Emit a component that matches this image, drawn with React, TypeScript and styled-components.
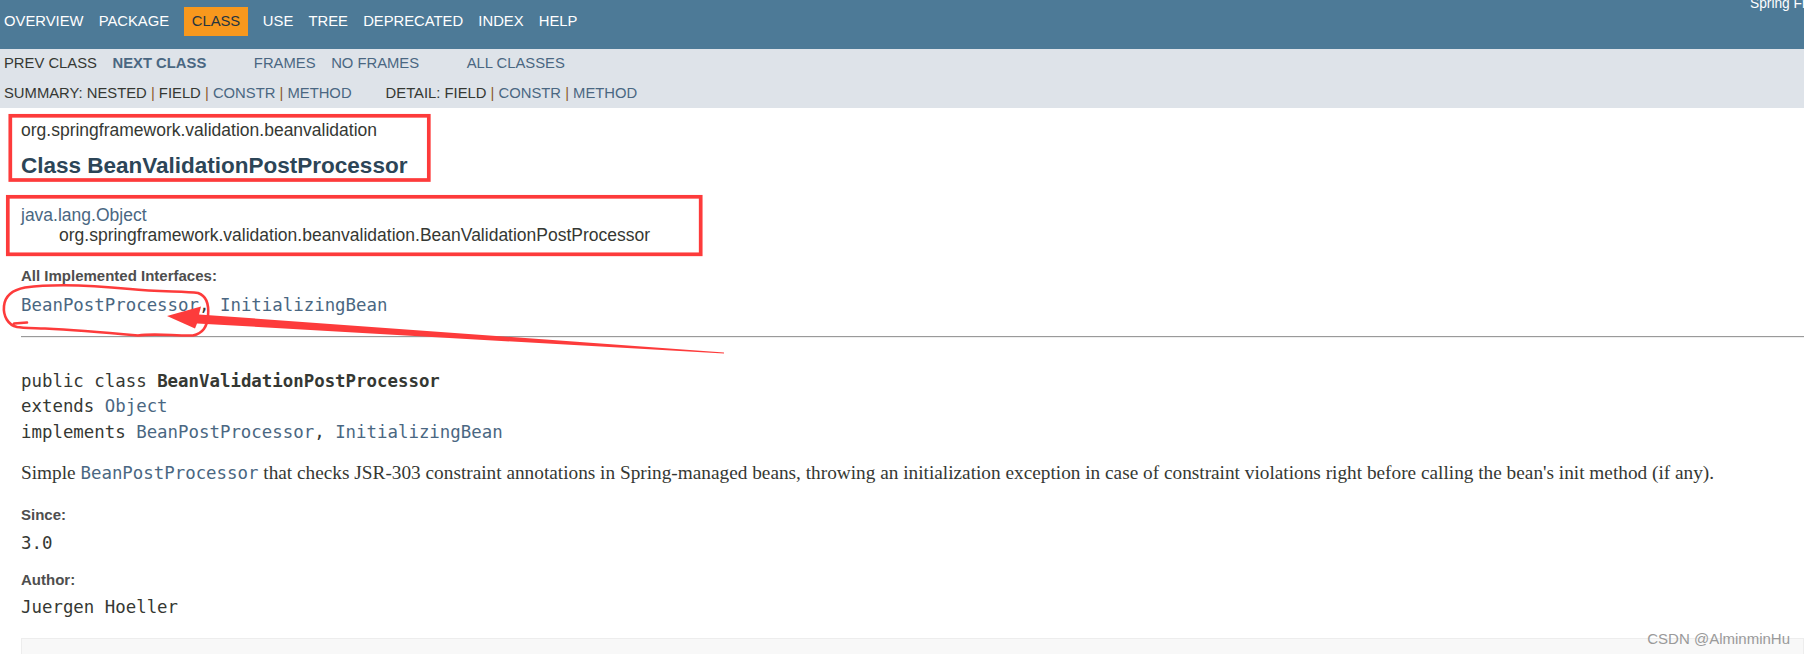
import React from "react";
import styled, { createGlobalStyle } from "styled-components";

const navItems = ["Overview", "Package", "Class", "Use", "Tree", "Deprecated", "Index", "Help"];

const App = () => {
  return (
    <Page>
      <GlobalStyle />
      <TopNav>
        <NavList>
          {navItems.map((item) => (
            <NavItem key={item} $active={item === "Class"}>
              {item}
            </NavItem>
          ))}
        </NavList>
        <AboutLanguage>Spring Framework</AboutLanguage>
      </TopNav>

      <SubNav>
        <SubRow>
          <SubList $first>
            <SubItem>Prev Class</SubItem>
            <SubItem>
              <Link $bold>Next Class</Link>
            </SubItem>
          </SubList>
          <SubList>
            <SubItem>
              <Link>Frames</Link>
            </SubItem>
            <SubItem>
              <Link>No Frames</Link>
            </SubItem>
          </SubList>
          <SubList>
            <SubItem>
              <Link>All Classes</Link>
            </SubItem>
          </SubList>
        </SubRow>
        <SubRow $gap={34}>
          <SummaryGroup>
            Summary:&nbsp;Nested <Sep>|</Sep> Field <Sep>|</Sep> <Link>Constr</Link> <Sep>|</Sep>{" "}
            <Link>Method</Link>
          </SummaryGroup>
          <SummaryGroup>
            Detail:&nbsp;Field <Sep>|</Sep> <Link>Constr</Link> <Sep>|</Sep> <Link>Method</Link>
          </SummaryGroup>
        </SubRow>
      </SubNav>

      <Header>
        <PackageLabel>org.springframework.validation.beanvalidation</PackageLabel>
        <Title>Class BeanValidationPostProcessor</Title>
      </Header>

      <Content>
        <Inheritance>
          <Line>
            <Link>java.lang.Object</Link>
          </Line>
          <Line $indent>org.springframework.validation.beanvalidation.BeanValidationPostProcessor</Line>
        </Inheritance>

        <Dt $gap={20.5}>All Implemented Interfaces:</Dt>
        <Dd $gap={9.5}>
          <Link>BeanPostProcessor</Link>, <Link>InitializingBean</Link>
        </Dd>

        <Rule />

        <Signature>
          public class <b>BeanValidationPostProcessor</b>
          {"\n"}extends <Link>Object</Link>
          {"\n"}implements <Link>BeanPostProcessor</Link>, <Link>InitializingBean</Link>
        </Signature>

        <Block>
          Simple <Code><Link>BeanPostProcessor</Link></Code> that checks JSR-303 constraint annotations in
          Spring-managed beans, throwing an initialization exception in case of constraint violations right
          before calling the bean's init method (if any).
        </Block>

        <Dt $gap={20.8}>Since:</Dt>
        <Dd $gap={8.3}>3.0</Dd>
        <Dt $gap={16.5}>Author:</Dt>
        <Dd $gap={7.8}>Juergen Hoeller</Dd>

        <MemberSummary />
      </Content>

      {/* red marks drawn on the screenshot */}
      <Marks width="1804" height="654" viewBox="0 0 1804 654">
        <rect x="10.3" y="115.8" width="418.5" height="64.2" fill="none" stroke="#fd3b3b" strokeWidth="3.7" />
        <rect x="7.8" y="196.8" width="692.9" height="57.5" fill="none" stroke="#fd3b3b" strokeWidth="3.7" />
        <path
          d="M 27 322.5 L 14 323.5 M 17 327 C 8 325, 3 316, 4 306 C 5 296, 12 290, 25 287.5 C 50 284, 90 285, 130 289 C 160 292, 185 291, 198 293 C 207 296, 209 306, 208 316 C 207 327, 203 333, 193 335.5 C 175 336, 155 333, 138 335.5 C 110 333, 75 330, 45 328.5 C 32 328, 22 328, 17 327"
          fill="none"
          stroke="#fd3b3b"
          strokeWidth="2.6"
          strokeLinecap="round"
        />
        <polygon
          points="167,316 201,306.5 199,314.5 724,352.4 724,353.6 197,323.5 195,328.5"
          fill="#fd3b3b"
        />
      </Marks>

      <Watermark>CSDN @AlminminHu</Watermark>
    </Page>
  );
};
export default App;

const GlobalStyle = createGlobalStyle`
  html, body {
    margin: 0;
    padding: 0;
    overflow: hidden;
    background: #ffffff;
  }
  body {
    font-family: "Liberation Sans", Arial, Helvetica, sans-serif;
    color: #353833;
  }
`;

const Page = styled.div`
  position: relative;
  width: 1804px;
  height: 654px;
  overflow: hidden;
`;

const TopNav = styled.div`
  display: flex;
  align-items: flex-start;
  height: 49px;
  padding-top: 7px;
  box-sizing: border-box;
  background: #4d7a97;
  color: #ffffff;
`;

const NavList = styled.ul`
  display: flex;
  margin: 0 0 0 -3.6px;
  padding: 0;
  list-style: none;
`;

const NavItem = styled.li<{ $active?: boolean }>`
  padding: 0 ${({ $active }) => ($active ? "8px" : "7.6px")};
  margin: 0 ${({ $active }) => ($active ? "7px" : "0")};
  font-size: 14.8px;
  line-height: 29px;
  text-transform: uppercase;
  white-space: nowrap;
  background: ${({ $active }) => ($active ? "#f8981d" : "transparent")};
  color: ${({ $active }) => ($active ? "#253441" : "#ffffff")};
`;

const AboutLanguage = styled.div`
  margin: -11px 0 0 auto;
  width: 54px;
  overflow: hidden;
  white-space: nowrap;
  font-size: 13.75px;
  line-height: 16px;
`;

const SubNav = styled.div`
  display: flex;
  flex-direction: column;
  gap: 9.5px;
  padding: 4px 0 5px;
  background: #dee3e9;
  font-size: 14.8px;
  line-height: 20px;
  text-transform: uppercase;
`;

const SubRow = styled.div<{ $gap?: number }>`
  display: flex;
  gap: ${({ $gap }) => $gap ?? 0}px;
  white-space: nowrap;
`;

const SubList = styled.ul<{ $first?: boolean }>`
  display: flex;
  margin: 0 32px 0 ${({ $first }) => ($first ? "-3.8px" : "0")};
  padding: 0;
  list-style: none;
`;

const SubItem = styled.li`
  padding: 0 7.8px;
`;

const SummaryGroup = styled.div`
  &:first-child {
    padding-left: 4px;
  }
`;

const Sep = styled.span`
  color: #8a5a2e;
`;

const Link = styled.a<{ $bold?: boolean }>`
  color: #4a6782;
  text-decoration: none;
  font-weight: ${({ $bold }) => ($bold ? "bold" : "normal")};
`;

const Header = styled.div`
  padding: 12.6px 21px 0;
`;

const PackageLabel = styled.div`
  font-size: 17.5px;
  line-height: 20px;
`;

const Title = styled.h2`
  margin: 12.6px 0 0;
  font-size: 22.5px;
  line-height: 26px;
  font-weight: bold;
  color: #2c4557;
`;

const Content = styled.div`
  padding: 0 0 0 21px;
`;

const Inheritance = styled.div`
  margin-top: 26px;
  font-size: 17.5px;
  line-height: 20.7px;
`;

const Line = styled.div<{ $indent?: boolean }>`
  margin-left: ${({ $indent }) => ($indent ? "38px" : "0")};
`;

const Dt = styled.div<{ $gap: number }>`
  margin-top: ${({ $gap }) => $gap}px;
  font-size: 15px;
  line-height: 18px;
  font-weight: bold;
  color: #4e4e4e;
`;

const Dd = styled.div<{ $gap: number }>`
  margin-top: ${({ $gap }) => $gap}px;
  font-family: "DejaVu Sans Mono", "Liberation Mono", monospace;
  font-size: 17.4px;
  line-height: 22px;
`;

const Rule = styled.hr`
  margin: 19.5px 0 0;
  border: 0;
  border-top: 1px solid #9a9a9a;
  border-bottom: 1px solid #eeeeee;
  height: 0;
`;

const Signature = styled.pre`
  margin: 31.5px 0 0;
  font-family: "DejaVu Sans Mono", "Liberation Mono", monospace;
  font-size: 17.4px;
  line-height: 25.3px;
  color: #353833;
`;

const Block = styled.div`
  margin-top: 16px;
  font-family: "Liberation Serif", Georgia, serif;
  font-size: 19.3px;
  line-height: 23px;
  white-space: nowrap;
`;

const Code = styled.code`
  font-family: "DejaVu Sans Mono", "Liberation Mono", monospace;
  font-size: 17.4px;
`;

const MemberSummary = styled.div`
  margin-top: 19.6px;
  height: 60px;
  background: #f8f8f8;
  border: 1px solid #ededed;
`;

const Marks = styled.svg`
  position: absolute;
  top: 0;
  left: 0;
  pointer-events: none;
`;

const Watermark = styled.div`
  position: absolute;
  right: 14px;
  bottom: 6.5px;
  font-size: 15px;
  line-height: 18px;
  color: #9a9a9a;
`;
